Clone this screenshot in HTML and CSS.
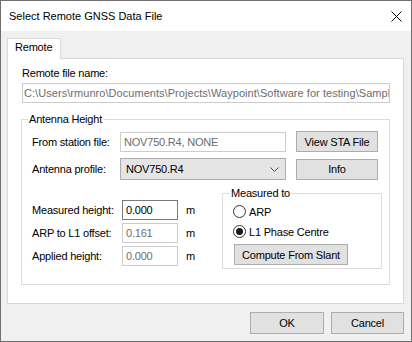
FILE: index.html
```html
<!DOCTYPE html>
<html lang="en">
<head>
  <meta charset="UTF-8" />
  <title>Select Remote GNSS Data File</title>
  <link rel="stylesheet" href="styles.css">
</head>
<body>
  <div class="window">
    <div class="titlebar">
      <span class="title">Select Remote GNSS Data File</span>
      <svg class="close" width="11" height="11" viewBox="0 0 11 11"><path d="M0.5 0.5L10.5 10.5M10.5 0.5L0.5 10.5" stroke="#000" stroke-width="1" fill="none"/></svg>
    </div>

    <div class="body">
      <div class="tabs">
        <div class="tab">Remote</div>
      </div>

      <div class="panel">
        <div class="label">Remote file name:</div>
        <div class="field disabled path">C:\Users\rmunro\Documents\Projects\Waypoint\Software for testing\Sample</div>

        <fieldset class="group antenna">
          <legend>Antenna Height</legend>

          <div class="row">
            <span class="row-label">From station file:</span>
            <div class="field disabled wide">NOV750.R4, NONE</div>
            <button class="btn side">View STA File</button>
          </div>

          <div class="row">
            <span class="row-label">Antenna profile:</span>
            <div class="combo">
              <span>NOV750.R4</span>
              <svg width="9" height="5" viewBox="0 0 9 5"><path d="M0.5 0.5L4.5 4.5L8.5 0.5" stroke="#444" fill="none"/></svg>
            </div>
            <button class="btn side">Info</button>
          </div>

          <div class="lower">
            <div class="heights">
              <div class="hrow">
                <span class="hlabel">Measured height:</span>
                <div class="field small active">0.000</div>
                <span class="unit">m</span>
              </div>
              <div class="hrow">
                <span class="hlabel">ARP to L1 offset:</span>
                <div class="field small disabled">0.161</div>
                <span class="unit">m</span>
              </div>
              <div class="hrow">
                <span class="hlabel">Applied height:</span>
                <div class="field small disabled">0.000</div>
                <span class="unit">m</span>
              </div>
            </div>

            <fieldset class="group measured">
              <legend>Measured to</legend>
              <div class="radio">
                <svg width="13" height="13" viewBox="0 0 13 13"><circle cx="6.5" cy="6.5" r="6" fill="#fff" stroke="#333"/></svg>
                <span>ARP</span>
              </div>
              <div class="radio">
                <svg width="13" height="13" viewBox="0 0 13 13"><circle cx="6.5" cy="6.5" r="6" fill="#fff" stroke="#333"/><circle cx="6.5" cy="6.5" r="3.5" fill="#1a1a1a"/></svg>
                <span>L1 Phase Centre</span>
              </div>
              <button class="btn compute">Compute From Slant</button>
            </fieldset>
          </div>
        </fieldset>
      </div>

      <div class="footer">
        <button class="btn ok">OK</button>
        <button class="btn cancel">Cancel</button>
      </div>
    </div>
  </div>
</body>
</html>
```

FILE: styles.css
```css
* {
  box-sizing: border-box;
}
body {
  margin: 0;
  font-family: "Liberation Sans", Arial, sans-serif;
  font-size: 11px;
  color: #000;
}
.window {
  width: 412px;
  height: 342px;
  border: 1px solid #6f6f6f;
  background: #f0f0f0;
  display: flex;
  flex-direction: column;
}
.titlebar {
  height: 30px;
  flex-shrink: 0;
  background: #fff;
  display: flex;
  align-items: center;
  justify-content: space-between;
  padding: 0 9px 0 8px;
}
.title {
  font-size: 11px;
}
.body {
  padding: 7px 7px 7px 6px;
  letter-spacing: -0.2px;
}
.tabs {
  display: flex;
}
.tab {
  width: 54px;
  height: 21px;
  margin-bottom: -1px;
  background: #fff;
  border: 1px solid #d9d9d9;
  border-bottom: none;
  padding-left: 7px;
  line-height: 17px;
  position: relative;
  z-index: 1;
}
.panel {
  background: #fff;
  border: 1px solid #d9d9d9;
  padding: 8px 13px 18px 14px;
}
.label {
  line-height: 13px;
}
.field {
  height: 20px;
  border: 1px solid #ccc;
  background: #fff;
  padding: 0 3px;
  line-height: 18px;
  white-space: nowrap;
  overflow: hidden;
}
.field.path {
  margin-top: 3px;
  padding-left: 1px;
  letter-spacing: 0.05px;
}
.disabled {
  color: #6d6d6d;
}
.field.active {
  border-color: #7a7a7a;
}
fieldset.group {
  border: 1px solid #dcdcdc;
  min-width: 0;
}
legend {
  padding: 0 1px;
  line-height: 13px;
}
.antenna {
  margin: 10px 0 0 -1px;
  padding: 5px 7px 15px 10px;
}
.antenna > legend {
  margin-left: -4px;
}
.row {
  display: flex;
  align-items: center;
  height: 21px;
}
.row + .row {
  margin-top: 6px;
  height: 22px;
}
.row-label {
  width: 88px;
}
.field.wide {
  width: 166px;
}
.combo {
  width: 166px;
  height: 22px;
  background: #e5e5e5;
  border: 1px solid #adadad;
  display: flex;
  align-items: center;
  justify-content: space-between;
  padding: 0 6px 0 5px;
}
.btn {
  font: inherit;
  letter-spacing: inherit;
  color: #000;
  background: #e1e1e1;
  border: 1px solid #adadad;
  padding: 0;
}
.btn.side {
  width: 82px;
  height: 21px;
  margin-left: 10px;
}
.lower {
  display: flex;
  justify-content: space-between;
  margin-top: 7px;
}
.heights {
  padding-top: 13px;
  display: flex;
  flex-direction: column;
  gap: 3px;
}
.hrow {
  display: flex;
  align-items: center;
}
.hlabel {
  width: 90px;
}
.field.small {
  width: 56px;
}
.unit {
  margin-left: 8px;
}
.measured {
  width: 160px;
  margin: 0;
  padding: 3px 7px 3px 10px;
}
.measured > legend {
  margin-left: -3px;
}
.radio {
  display: flex;
  align-items: center;
  gap: 3px;
  height: 17px;
}
.radio + .radio {
  margin-top: 3px;
}
.btn.compute {
  display: block;
  margin: 4px 0 0 1px;
  width: 114px;
  height: 21px;
}
.footer {
  display: flex;
  justify-content: flex-end;
  gap: 7px;
  margin-top: 8px;
}
.btn.ok {
  width: 74px;
  height: 22px;
}
.btn.cancel {
  width: 73px;
  height: 22px;
}
```
